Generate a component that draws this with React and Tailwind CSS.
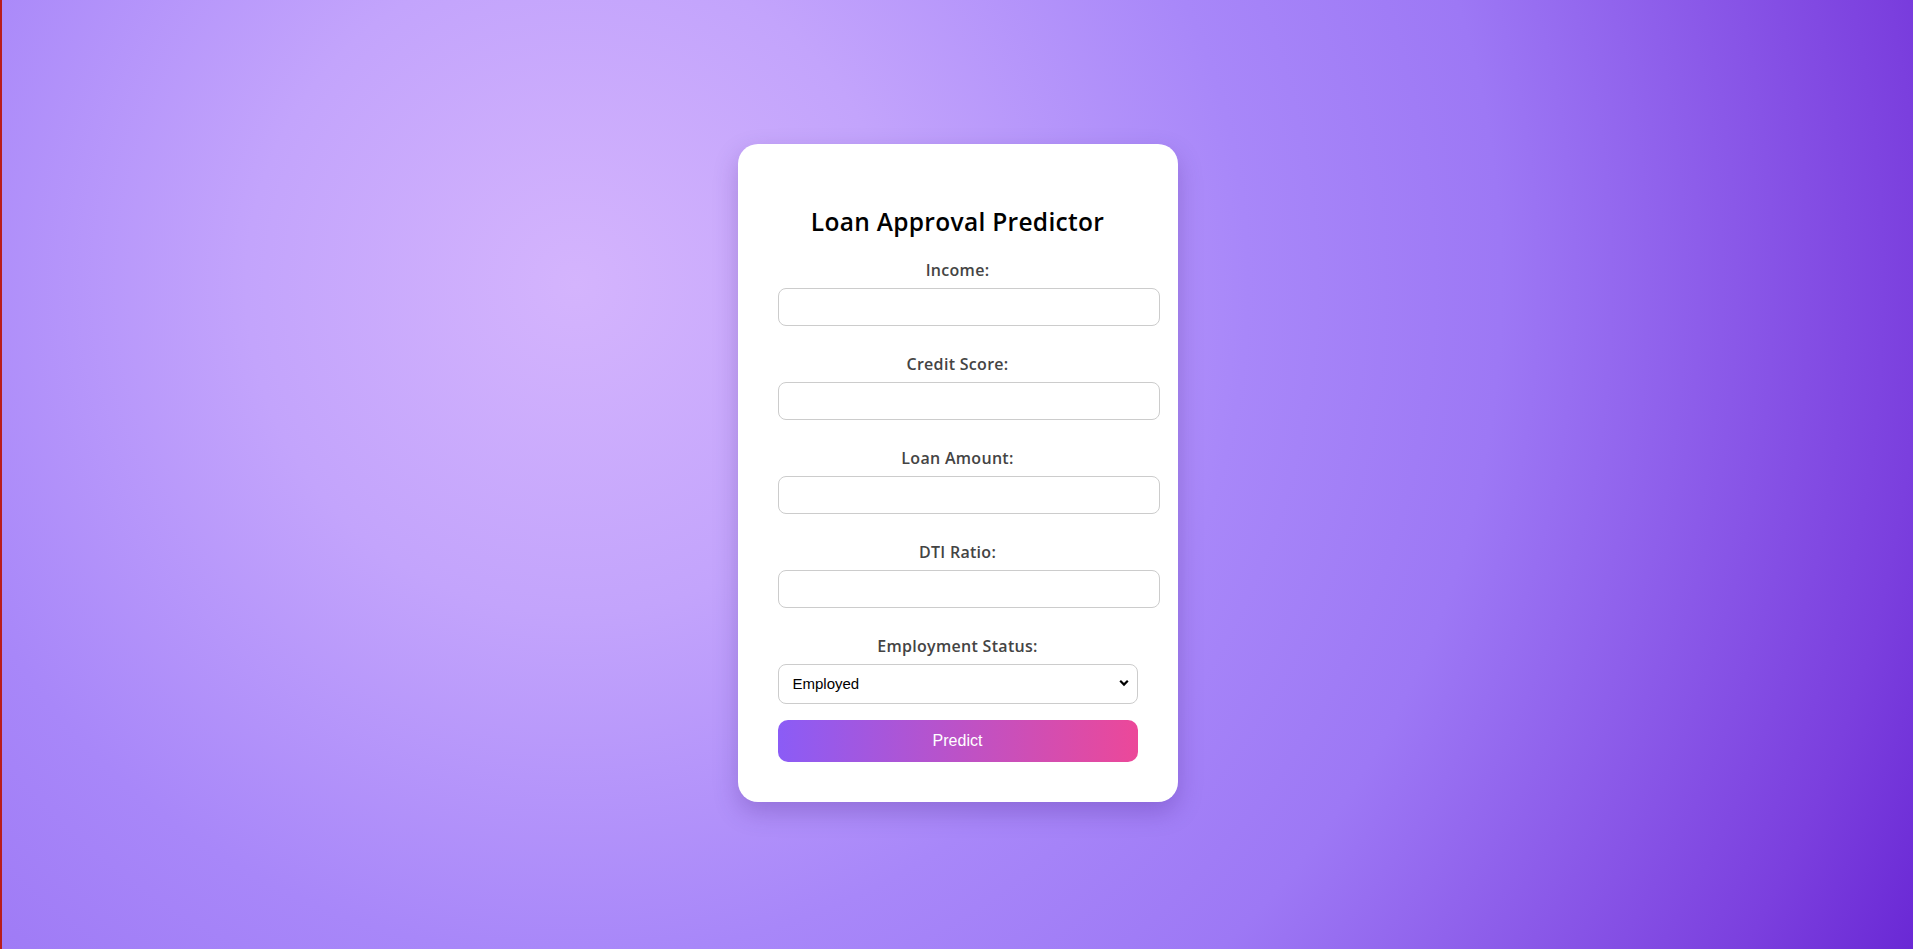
import React from "react";

const fields = ["Income:", "Credit Score:", "Loan Amount:", "DTI Ratio:"];

export default function App() {
  return (
    <div className="min-h-[949px] w-full flex items-start justify-center border-l-2 border-[#b91c1c] bg-[radial-gradient(circle_at_30%_30%,#d4b4fd_0%,#c3a4fc_22%,#a887f9_45%,#9d78f5_62%,#7b3fde_90%,#6a28d5_100%)] font-['Open_Sans',sans-serif]">
      <div className="mt-[144px] w-[440px] rounded-[20px] bg-white px-[40px] pt-[40px] pb-[40px] shadow-[0_10px_25px_rgba(60,20,120,0.25)]">
        <h2 className="mt-[20px] mb-[20px] h-[36px] text-center text-[24.5px] leading-[36px] font-semibold tracking-[0.3px] text-black">
          Loan Approval Predictor
        </h2>
        {fields.map((f) => (
          <div key={f} className="mb-[28px]">
            <label className="block h-[20px] text-center text-[16px] leading-[20px] font-semibold tracking-[0.3px] text-[#444]">
              {f}
            </label>
            <input
              type="text"
              className="mt-[8px] block h-[38px] w-[382px] rounded-[8px] border border-[#ccc] bg-white px-[10px] outline-none"
            />
          </div>
        ))}
        <label className="block h-[20px] text-center text-[16px] leading-[20px] font-semibold tracking-[0.3px] text-[#444]">
          Employment Status:
        </label>
        <div className="relative mt-[8px] h-[40px] w-full">
          <select className="block h-[40px] w-full appearance-none rounded-[8px] border border-[#ccc] bg-white pl-[14px] pr-[30px] font-['Liberation_Sans',Arial,sans-serif] text-[15px] text-black outline-none">
            <option>Employed</option>
            <option>Unemployed</option>
          </select>
          <svg
            className="pointer-events-none absolute right-[9px] top-[15px]"
            width="10"
            height="8"
            viewBox="0 0 10 8"
          >
            <path d="M1.2 1.8 L5 5.6 L8.8 1.8" fill="none" stroke="#000" strokeWidth="2.2" />
          </svg>
        </div>
        <button className="mt-[16px] block h-[42px] w-full rounded-[10px] bg-[linear-gradient(90deg,#8b5cf6,#ec4899)] text-center font-['Liberation_Sans',Arial,sans-serif] text-[16px] text-white">
          Predict
        </button>
      </div>
    </div>
  );
}
